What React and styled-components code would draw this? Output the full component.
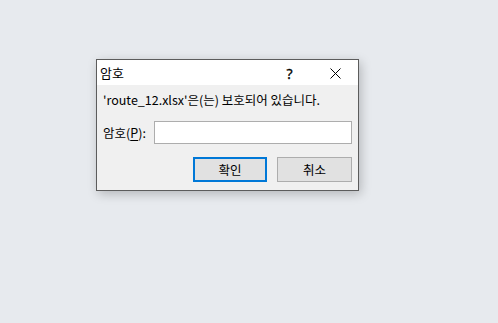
import React from "react";
import styled, { createGlobalStyle } from "styled-components";

const GlobalStyle = createGlobalStyle`
  html, body {
    margin: 0;
    padding: 0;
    background: #e7eaee;
  }
  body {
    font-family: "Noto Sans CJK KR", "Noto Sans", sans-serif;
    font-size: 12px;
    color: #000;
  }
`;

export default function App() {
  return (
    <>
      <GlobalStyle />
      <Page>
        <Dialog>
          <TitleBar>
            <Title>암호</Title>
            <Caption>
              <CaptionButton>?</CaptionButton>
              <CaptionButton aria-label="닫기">
                <svg width="11" height="11" viewBox="0 0 11 11">
                  <path d="M0.5 0.5 L10.5 10.5 M10.5 0.5 L0.5 10.5" stroke="#000" strokeWidth="1" fill="none" />
                </svg>
              </CaptionButton>
            </Caption>
          </TitleBar>
          <Body>
            <Message>'route_12.xlsx'은(는) 보호되어 있습니다.</Message>
            <Field>
              <Label>
                암호(<u>P</u>):
              </Label>
              <Input type="password" />
            </Field>
            <Buttons>
              <Button $primary>확인</Button>
              <Button>취소</Button>
            </Buttons>
          </Body>
        </Dialog>
      </Page>
    </>
  );
}

const Page = styled.div`
  width: 498px;
  height: 323px;
  box-sizing: border-box;
  padding: 59px 0 0 96px;
`;

const Dialog = styled.div`
  width: 263px;
  box-sizing: border-box;
  border: 1px solid #5c5c5c;
  background: #f0f0f0;
  box-shadow: 2px 3px 10px rgba(0, 0, 0, 0.22);
`;

const TitleBar = styled.div`
  height: 25px;
  background: #ffffff;
  display: flex;
  align-items: center;
  justify-content: space-between;
`;

const Title = styled.div`
  padding-left: 3px;
  font-size: 13px;
  line-height: 25px;
`;

const Caption = styled.div`
  display: flex;
  height: 100%;
`;

const CaptionButton = styled.div`
  width: 45px;
  height: 100%;
  display: flex;
  align-items: center;
  justify-content: center;
  font-family: "Noto Sans", sans-serif;
  font-size: 14px;
  padding-top: 2px;
  box-sizing: border-box;
  -webkit-text-stroke: 0.3px #000;
  &:first-child {
    padding-right: 2px;
  }
`;

const Body = styled.div`
  padding: 7px 6px 8px 6px;
`;

const Message = styled.div`
  font-size: 12.5px;
  line-height: 16px;
`;

const Field = styled.div`
  display: flex;
  align-items: center;
  margin-top: 13px;
  gap: 6px;
`;

const Label = styled.span`
  width: 45px;
  font-size: 12.5px;
  line-height: 16px;
  white-space: nowrap;
  u {
    text-underline-offset: 2px;
  }
`;

const Input = styled.input`
  flex: 1;
  height: 23px;
  box-sizing: border-box;
  border: 1px solid #adadad;
  background: #fff;
  outline: none;
  margin: 0;
`;

const Buttons = styled.div`
  display: flex;
  justify-content: flex-end;
  gap: 10px;
  margin-top: 13px;
`;

const Button = styled.button`
  width: ${(p) => (p.$primary ? "74px" : "75px")};
  height: 25px;
  box-sizing: border-box;
  margin: 0;
  padding: 0;
  background: #e1e1e1;
  border: ${(p) => (p.$primary ? "2px solid #0078d7" : "1px solid #adadad")};
  font-family: "Noto Sans CJK KR", "Noto Sans", sans-serif;
  font-size: 12.5px;
  color: #000;
`;
